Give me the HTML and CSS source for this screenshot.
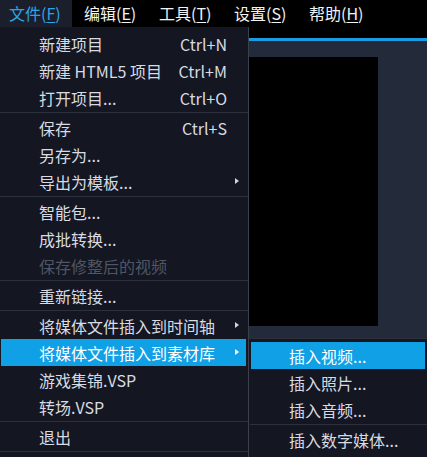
FILE: index.html
```html
<!DOCTYPE html>
<html lang="zh-CN">
<head>
    <meta charset="UTF-8">
    <title>文件菜单</title>
    <link rel="stylesheet" href="styles.css">
</head>
<body>

<div class="menubar">
    <span class="bar-item open">文件(<u>F</u>)</span>
    <span class="bar-item">编辑(<u>E</u>)</span>
    <span class="bar-item">工具(<u>T</u>)</span>
    <span class="bar-item">设置(<u>S</u>)</span>
    <span class="bar-item">帮助(<u>H</u>)</span>
</div>

<div class="workspace">
    <div class="preview"></div>
</div>

<div class="menu main-menu">
    <div class="item"><span>新建项目</span><span class="key">Ctrl+N</span></div>
    <div class="item"><span>新建 HTML5 项目</span><span class="key">Ctrl+M</span></div>
    <div class="item"><span>打开项目...</span><span class="key">Ctrl+O</span></div>
    <div class="sep"></div>
    <div class="item"><span>保存</span><span class="key">Ctrl+S</span></div>
    <div class="item"><span>另存为...</span></div>
    <div class="item sub"><span>导出为模板...</span></div>
    <div class="sep"></div>
    <div class="item"><span>智能包...</span></div>
    <div class="item"><span>成批转换...</span></div>
    <div class="item disabled"><span>保存修整后的视频</span></div>
    <div class="sep"></div>
    <div class="item"><span>重新链接...</span></div>
    <div class="sep"></div>
    <div class="item sub"><span>将媒体文件插入到时间轴</span></div>
    <div class="item sub active"><span>将媒体文件插入到素材库</span></div>
    <div class="item"><span>游戏集锦.VSP</span></div>
    <div class="item"><span>转场.VSP</span></div>
    <div class="sep"></div>
    <div class="item"><span>退出</span></div>
    <div class="sep"></div>
</div>

<div class="menu sub-menu">
    <div class="item active"><span>插入视频...</span></div>
    <div class="item"><span>插入照片...</span></div>
    <div class="item"><span>插入音频...</span></div>
    <div class="sep"></div>
    <div class="item"><span>插入数字媒体...</span></div>
</div>

</body>
</html>
```

FILE: styles.css
```css
body {
    margin: 0;
    width: 427px;
    height: 457px;
    overflow: hidden;
    background: #000;
    font-family: "Noto Sans CJK SC", "Noto Sans", sans-serif;
    font-size: 16px;
    color: #d8dbe2;
    position: relative;
}
.menubar {
    height: 38px;
    display: flex;
    align-items: flex-start;
}
.bar-item {
    width: 72px;
    height: 27px;
    line-height: 27px;
    padding-left: 9px;
    margin-right: 3px;
    box-sizing: border-box;
    color: #f2f3f5;
    white-space: nowrap;
}
.bar-item u {
    text-underline-offset: 2px;
}
.bar-item.open {
    background: #1b1f2b;
    color: #2fa3e6;
}
.workspace {
    border-top: 3px solid #1b9be2;
    background: #232a3a;
    height: 416px;
    padding-top: 16px;
    box-sizing: border-box;
}
.preview {
    margin-left: 240px;
    width: 138px;
    height: 269px;
    background: #000;
}

/* dropdowns */
.menu {
    position: absolute;
    background: #141722;
    box-sizing: border-box;
}
.main-menu {
    left: 0;
    top: 27px;
    width: 249px;
    height: 430px;
    padding: 3px 2px 0 1px;
    border-right: 1px solid #3b404d;
}
.sub-menu {
    left: 248px;
    top: 338px;
    width: 179px;
    height: 119px;
    padding: 3px 2px 0 2px;
    border-left: 1px solid #3b404d;
    border-top: 1px solid #2a2f3b;
}
.item {
    height: 27px;
    display: flex;
    align-items: center;
    justify-content: space-between;
    padding: 0 19px 0 38px;
    white-space: nowrap;
    position: relative;
}
.key {
    text-align: right;
}
.item.active {
    background: #0fa0e6;
    color: #fff;
}
.item.disabled {
    color: #4f5564;
}
.item.sub::after {
    content: "";
    position: absolute;
    right: 7px;
    top: 10px;
    border-left: 4px solid #cfd3da;
    border-top: 3.5px solid transparent;
    border-bottom: 3.5px solid transparent;
}
.item.sub.active::after {
    border-left-color: #fff;
}
.sep {
    height: 1px;
    margin: 1px -2px 1px -1px;
    background: #2c313d;
}
```
